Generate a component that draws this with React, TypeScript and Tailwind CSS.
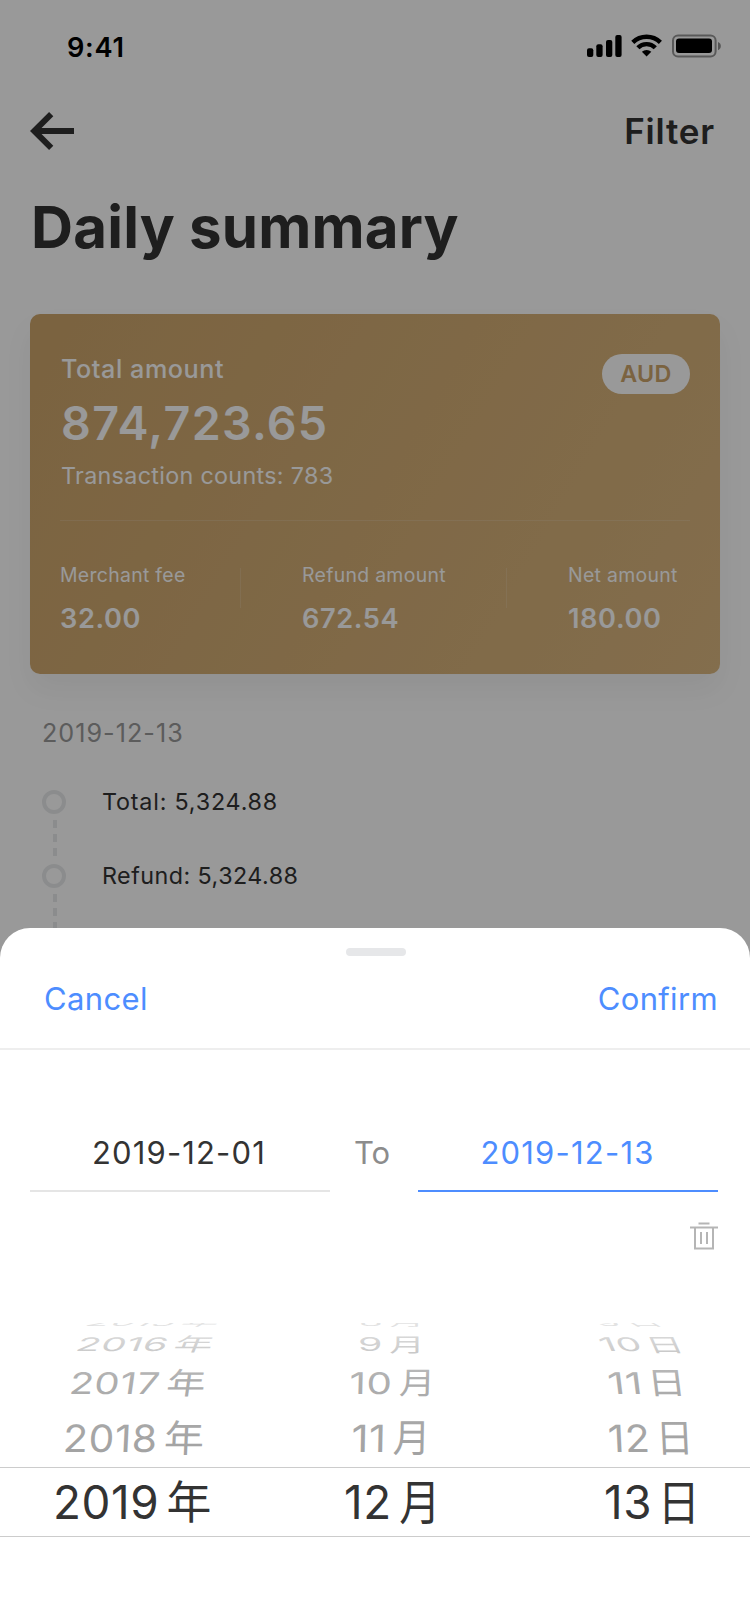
import React from "react";

type Cell = { num: string; unit: string; left: number; skew: number; sx: number };
type WheelRow = { height: number; sy: number; cells: Cell[] };

const wheel: WheelRow[] = [
  {
    height: 6,
    sy: 0.22,
    cells: [
      { num: "2015", unit: "年", left: 78, skew: -25, sx: 0.83 },
      { num: "8", unit: "月", left: 109, skew: 0, sx: 0.84 },
      { num: "9", unit: "日", left: 106, skew: 25, sx: 0.84 },
    ],
  },
  {
    height: 28,
    sy: 0.41,
    cells: [
      { num: "2016", unit: "年", left: 72, skew: -11, sx: 0.86 },
      { num: "9", unit: "月", left: 108, skew: 0, sx: 0.86 },
      { num: "10", unit: "日", left: 105, skew: 12, sx: 0.86 },
    ],
  },
  {
    height: 46,
    sy: 0.65,
    cells: [
      { num: "2017", unit: "年", left: 67, skew: -6, sx: 0.87 },
      { num: "10", unit: "月", left: 99, skew: -1, sx: 0.88 },
      { num: "11", unit: "日", left: 110, skew: 5, sx: 0.91 },
    ],
  },
  {
    height: 60,
    sy: 0.82,
    cells: [
      { num: "2018", unit: "年", left: 62, skew: -2.5, sx: 0.89 },
      { num: "11", unit: "月", left: 101, skew: -1, sx: 0.91 },
      { num: "12", unit: "日", left: 109, skew: 2.5, sx: 0.89 },
    ],
  },
];

const selected = [
  { num: "2019", unit: "年", left: 53 },
  { num: "12", unit: "月", left: 94 },
  { num: "13", unit: "日", left: 104 },
];

const unitClass: Record<string, string> = {
  年: "ml-[7px] -translate-y-[4px] scale-x-98",
  月: "ml-[5px] -translate-y-[4px] scale-x-90 scale-y-104",
  日: "ml-[4px] -translate-y-[4px] scale-x-92 scale-y-104",
};

function DateValue({ num, unit }: { num: string; unit: string }) {
  return (
    <>
      <span className="tracking-[0.6px]">{num}</span>
      <span className={`font-['Noto_Sans_CJK_SC',sans-serif] ${unitClass[unit]}`}>{unit}</span>
    </>
  );
}

function StatusIcons() {
  return (
    <svg width="136" height="26" viewBox="586 33 136 26" fill="none">
      <g fill="#000">
        <rect x="587" y="48.3" width="6.3" height="8.7" rx="2" />
        <rect x="596.3" y="44.3" width="6.3" height="12.7" rx="2" />
        <rect x="606" y="40" width="6.3" height="17" rx="2" />
        <rect x="615.3" y="35" width="6.3" height="22" rx="2" />
      </g>
      <g stroke="#000" strokeWidth="4.4">
        <path d="M632.8 42.4a19.6 19.6 0 0 1 27.6 0" />
        <path d="M637.9 47.8a12.2 12.2 0 0 1 17.4 0" />
      </g>
      <path d="M646.6 56.6l-4.7-4.8a6.9 6.9 0 0 1 9.4 0z" fill="#000" />
      <rect x="673" y="35.5" width="42.6" height="21" rx="5" stroke="#000" strokeOpacity=".42" strokeWidth="2" />
      <rect x="676" y="38.5" width="36" height="14.6" rx="3" fill="#000" />
      <path d="M718 42a4.4 4.4 0 0 1 0 8.2z" fill="#000" fillOpacity=".45" />
    </svg>
  );
}

function TimelineRow({ text, className }: { text: string; className: string }) {
  return (
    <div className="flex h-[74px] items-start">
      <svg width="24" height="74" viewBox="0 0 24 74" fill="none">
        <circle cx="12" cy="12" r="10" stroke="#e8eaec" strokeWidth="4" />
        <path d="M13 30v8M13 44v8M13 58v8" stroke="#e8eaec" strokeWidth="4" />
      </svg>
      <span className={`ml-[36px] text-[23.3px] leading-[24px] text-[#333] ${className}`}>{text}</span>
    </div>
  );
}

function Stat({ label, value, className }: { label: string; value: string; className: string }) {
  return (
    <div className={className}>
      <div className="text-[19.4px] leading-[32px] tracking-[0.32px]">{label}</div>
      <div className="pt-px text-[27.2px] leading-[54px] font-semibold tracking-[0.6px]">{value}</div>
    </div>
  );
}

function Summary() {
  return (
    <div className="flex flex-col">
      <div className="flex h-[92px] items-center justify-between pr-[28px] pl-[67px]">
        <span className="pt-[3px] text-[27.2px] leading-none font-semibold tracking-[0.7px] text-black">9:41</span>
        <StatusIcons />
      </div>
      <div className="flex h-[78px] items-center justify-between pr-[35px] pl-[30px]">
        <svg width="46" height="40" viewBox="0 0 46 40" fill="none" stroke="#333" strokeWidth="6">
          <path d="M21.2 3.2L4.2 20l17 16.8M5 20h39" />
        </svg>
        <span className="text-[35px] leading-none font-semibold tracking-[0.8px] text-[#333]">Filter</span>
      </div>
      <h1 className="pl-[31px] text-[58.2px] leading-[114px] font-bold tracking-[0.2px] text-[#333]">Daily summary</h1>

      <section className="mx-[30px] mt-[30px] h-[360px] rounded-[10px] bg-linear-120 from-[#cda56b] to-[#dbb780] px-[30px] pt-[37px] text-white shadow-[0_16px_30px_rgba(0,0,0,0.05)]">
        <div className="flex items-start justify-between">
          <div className="flex flex-col pl-px">
            <span className="text-[25.2px] leading-[36px] font-medium tracking-[0.55px]">Total amount</span>
            <span className="text-[46.6px] leading-[72px] font-semibold tracking-[1.3px]">874,723.65</span>
            <span className="text-[23.3px] leading-[34px] tracking-[0.32px]">Transaction counts: 783</span>
          </div>
          <span className="mt-[3px] flex h-[40px] w-[88px] items-center justify-center rounded-full bg-white text-[23.3px] font-semibold tracking-[0.3px] text-[#cda56b]">
            AUD
          </span>
        </div>
        <div className="mt-[27px] h-px bg-white/15" />
        <div className="mt-[38px] flex items-start">
          <Stat label="Merchant fee" value="32.00" className="w-[180px]" />
          <div className="mt-[9px] h-[40px] w-px bg-white/15" />
          <Stat label="Refund amount" value="672.54" className="ml-[61px] w-[204px]" />
          <div className="mt-[9px] h-[40px] w-px bg-white/15" />
          <Stat label="Net amount" value="180.00" className="ml-[61px]" />
        </div>
      </section>

      <div className="mt-[29px] pl-[42px] text-[25.2px] leading-[60px] tracking-[1px] text-[#999]">2019-12-13</div>
      <div className="mt-[27px] pl-[42px]">
        <TimelineRow text="Total: 5,324.88" className="tracking-[0.8px]" />
        <TimelineRow text="Refund: 5,324.88" className="tracking-[0.46px]" />
      </div>
    </div>
  );
}

function Picker() {
  return (
    <div className="mt-[73px]">
      <div className="relative h-[144px] overflow-hidden">
        {wheel.map((row, i) => (
          <div key={i} className="grid grid-cols-3 items-end" style={{ height: row.height }}>
            {row.cells.map((c) => (
              <div key={c.num} className="flex h-0 items-end whitespace-nowrap">
                <div
                  className="flex origin-bottom-left items-center text-[45.8px] leading-[60px] text-[#a3a3a3]"
                  style={{ marginLeft: c.left, transform: `scale(${c.sx}, ${row.sy}) skewX(${c.skew}deg)` }}
                >
                  <DateValue num={c.num} unit={c.unit} />
                </div>
              </div>
            ))}
          </div>
        ))}
        <div className="absolute inset-0 bg-[linear-gradient(to_bottom,rgba(255,255,255,0.7)_0px,rgba(255,255,255,0.5)_22px,rgba(255,255,255,0.12)_56px,rgba(255,255,255,0)_130px)]" />
      </div>
      <div className="grid h-[70px] grid-cols-3 border-y border-[#ccc] pt-px">
        {selected.map((c) => (
          <div
            key={c.num}
            className="flex items-center text-[45.8px] leading-[68px] text-[#333]"
            style={{ marginLeft: c.left }}
          >
            <DateValue num={c.num} unit={c.unit} />
          </div>
        ))}
      </div>
    </div>
  );
}

function Sheet() {
  return (
    <div className="absolute inset-x-0 bottom-0 flex h-[696px] flex-col rounded-t-[30px] bg-white">
      <div className="mt-[20px] ml-[346px] h-[8px] w-[60px] rounded-full bg-[#e6e7e9]" />
      <div className="flex h-[94px] items-start justify-between border-b-2 border-[#eee] pr-[32px] pl-[44px] text-[31px] leading-[86px] tracking-[0.35px] text-[#4d8dff]">
        <span>Cancel</span>
        <span>Confirm</span>
      </div>
      <div className="mt-[66px] flex pr-[32px] pl-[30px] text-center text-[31px] leading-[74px]">
        <div className="w-[300px] border-b-2 border-[#e5e5e5] pr-[2px] tracking-[1.15px] text-[#333]">2019-12-01</div>
        <div className="w-[88px] pr-[4px] text-[#8c8c8c]">To</div>
        <div className="w-[300px] border-b-2 border-[#4d8dff] pr-px tracking-[1.2px] text-[#4d8dff]">2019-12-13</div>
      </div>
      <div className="mt-[30px] flex justify-end pr-[32px]">
        <svg width="28" height="28" viewBox="0 0 28 28" fill="none" stroke="#b5b5b5" strokeWidth="2">
          <path d="M8.5 1.5h11M0 5.5h28M5 5.5V26.5h18V5.5M11 10v12M17 10v12" />
        </svg>
      </div>
      <Picker />
    </div>
  );
}

export default function App() {
  return (
    <div className="relative h-[1624px] w-[750px] overflow-hidden bg-white font-['Inter','Noto_Sans_CJK_SC',sans-serif]">
      <Summary />
      <div className="absolute inset-0 bg-black/40" />
      <Sheet />
    </div>
  );
}
